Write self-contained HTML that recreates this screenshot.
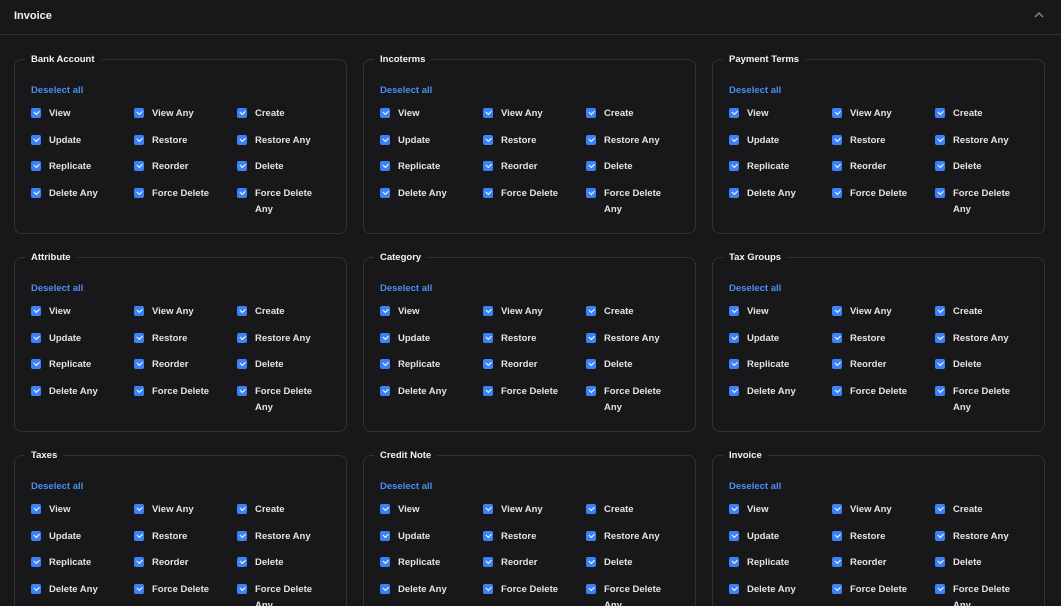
<!DOCTYPE html>
<html><head><meta charset="utf-8"><style>
*{box-sizing:border-box;margin:0;padding:0}
html,body{width:1061px;height:606px;overflow:hidden}
body{background:#18181b;font-family:"Liberation Sans",sans-serif;color:#e4e4e7;position:relative}
.hd{position:absolute;left:0;top:0;width:1061px;height:35px;border-bottom:1px solid #313136}
.hd .t{position:absolute;left:14px;top:10px;font-size:11px;font-weight:700;color:#f4f4f5}
.hd svg{position:absolute;left:1034px;top:12px}
.c{position:absolute;width:333px;height:175px;border:1px solid #313136;border-radius:8px}
.lg{position:absolute;left:10px;top:-7px;padding:0 6px;background:#18181b;font-size:9.5px;font-weight:700;color:#f4f4f5;line-height:13px}
.ds{position:absolute;left:16px;top:25px;font-size:9.5px;font-weight:700;color:#4a8ff0;line-height:12px}
.g{position:absolute;left:16px;top:46px;display:grid;grid-template-columns:103px 103px 103px;grid-auto-rows:26.7px}
.i{position:relative;padding-left:18px;font-size:9.5px;font-weight:700;color:#e4e4e7;line-height:16px;width:100px}
.i::before{content:"";position:absolute;left:0;top:2px;width:10px;height:10px;border-radius:2px;background:#3b82f6}
.i::after{content:"";position:absolute;left:3px;top:4px;width:4px;height:2.5px;border-left:1.3px solid #fff;border-bottom:1.3px solid #fff;transform:rotate(-45deg)}
</style></head><body>
<div class="hd"><span class="t">Invoice</span><svg width="10" height="6" viewBox="0 0 10 6"><path d="M1 5L5 1L9 5" stroke="#8a8a90" stroke-width="1.3" fill="none"/></svg></div>

<div class="c" style="left:14px;top:59px"><span class="lg">Bank Account</span><span class="ds">Deselect all</span><div class="g"><div class="i">View</div><div class="i">View Any</div><div class="i">Create</div><div class="i">Update</div><div class="i">Restore</div><div class="i">Restore Any</div><div class="i">Replicate</div><div class="i">Reorder</div><div class="i">Delete</div><div class="i">Delete Any</div><div class="i">Force Delete</div><div class="i" style="width:82px">Force Delete Any</div></div></div>
<div class="c" style="left:363px;top:59px"><span class="lg">Incoterms</span><span class="ds">Deselect all</span><div class="g"><div class="i">View</div><div class="i">View Any</div><div class="i">Create</div><div class="i">Update</div><div class="i">Restore</div><div class="i">Restore Any</div><div class="i">Replicate</div><div class="i">Reorder</div><div class="i">Delete</div><div class="i">Delete Any</div><div class="i">Force Delete</div><div class="i" style="width:82px">Force Delete Any</div></div></div>
<div class="c" style="left:712px;top:59px"><span class="lg">Payment Terms</span><span class="ds">Deselect all</span><div class="g"><div class="i">View</div><div class="i">View Any</div><div class="i">Create</div><div class="i">Update</div><div class="i">Restore</div><div class="i">Restore Any</div><div class="i">Replicate</div><div class="i">Reorder</div><div class="i">Delete</div><div class="i">Delete Any</div><div class="i">Force Delete</div><div class="i" style="width:82px">Force Delete Any</div></div></div>

<div class="c" style="left:14px;top:257px"><span class="lg">Attribute</span><span class="ds">Deselect all</span><div class="g"><div class="i">View</div><div class="i">View Any</div><div class="i">Create</div><div class="i">Update</div><div class="i">Restore</div><div class="i">Restore Any</div><div class="i">Replicate</div><div class="i">Reorder</div><div class="i">Delete</div><div class="i">Delete Any</div><div class="i">Force Delete</div><div class="i" style="width:82px">Force Delete Any</div></div></div>
<div class="c" style="left:363px;top:257px"><span class="lg">Category</span><span class="ds">Deselect all</span><div class="g"><div class="i">View</div><div class="i">View Any</div><div class="i">Create</div><div class="i">Update</div><div class="i">Restore</div><div class="i">Restore Any</div><div class="i">Replicate</div><div class="i">Reorder</div><div class="i">Delete</div><div class="i">Delete Any</div><div class="i">Force Delete</div><div class="i" style="width:82px">Force Delete Any</div></div></div>
<div class="c" style="left:712px;top:257px"><span class="lg">Tax Groups</span><span class="ds">Deselect all</span><div class="g"><div class="i">View</div><div class="i">View Any</div><div class="i">Create</div><div class="i">Update</div><div class="i">Restore</div><div class="i">Restore Any</div><div class="i">Replicate</div><div class="i">Reorder</div><div class="i">Delete</div><div class="i">Delete Any</div><div class="i">Force Delete</div><div class="i" style="width:82px">Force Delete Any</div></div></div>

<div class="c" style="left:14px;top:455px"><span class="lg">Taxes</span><span class="ds">Deselect all</span><div class="g"><div class="i">View</div><div class="i">View Any</div><div class="i">Create</div><div class="i">Update</div><div class="i">Restore</div><div class="i">Restore Any</div><div class="i">Replicate</div><div class="i">Reorder</div><div class="i">Delete</div><div class="i">Delete Any</div><div class="i">Force Delete</div><div class="i" style="width:82px">Force Delete Any</div></div></div>
<div class="c" style="left:363px;top:455px"><span class="lg">Credit Note</span><span class="ds">Deselect all</span><div class="g"><div class="i">View</div><div class="i">View Any</div><div class="i">Create</div><div class="i">Update</div><div class="i">Restore</div><div class="i">Restore Any</div><div class="i">Replicate</div><div class="i">Reorder</div><div class="i">Delete</div><div class="i">Delete Any</div><div class="i">Force Delete</div><div class="i" style="width:82px">Force Delete Any</div></div></div>
<div class="c" style="left:712px;top:455px"><span class="lg">Invoice</span><span class="ds">Deselect all</span><div class="g"><div class="i">View</div><div class="i">View Any</div><div class="i">Create</div><div class="i">Update</div><div class="i">Restore</div><div class="i">Restore Any</div><div class="i">Replicate</div><div class="i">Reorder</div><div class="i">Delete</div><div class="i">Delete Any</div><div class="i">Force Delete</div><div class="i" style="width:82px">Force Delete Any</div></div></div>
</body></html>
